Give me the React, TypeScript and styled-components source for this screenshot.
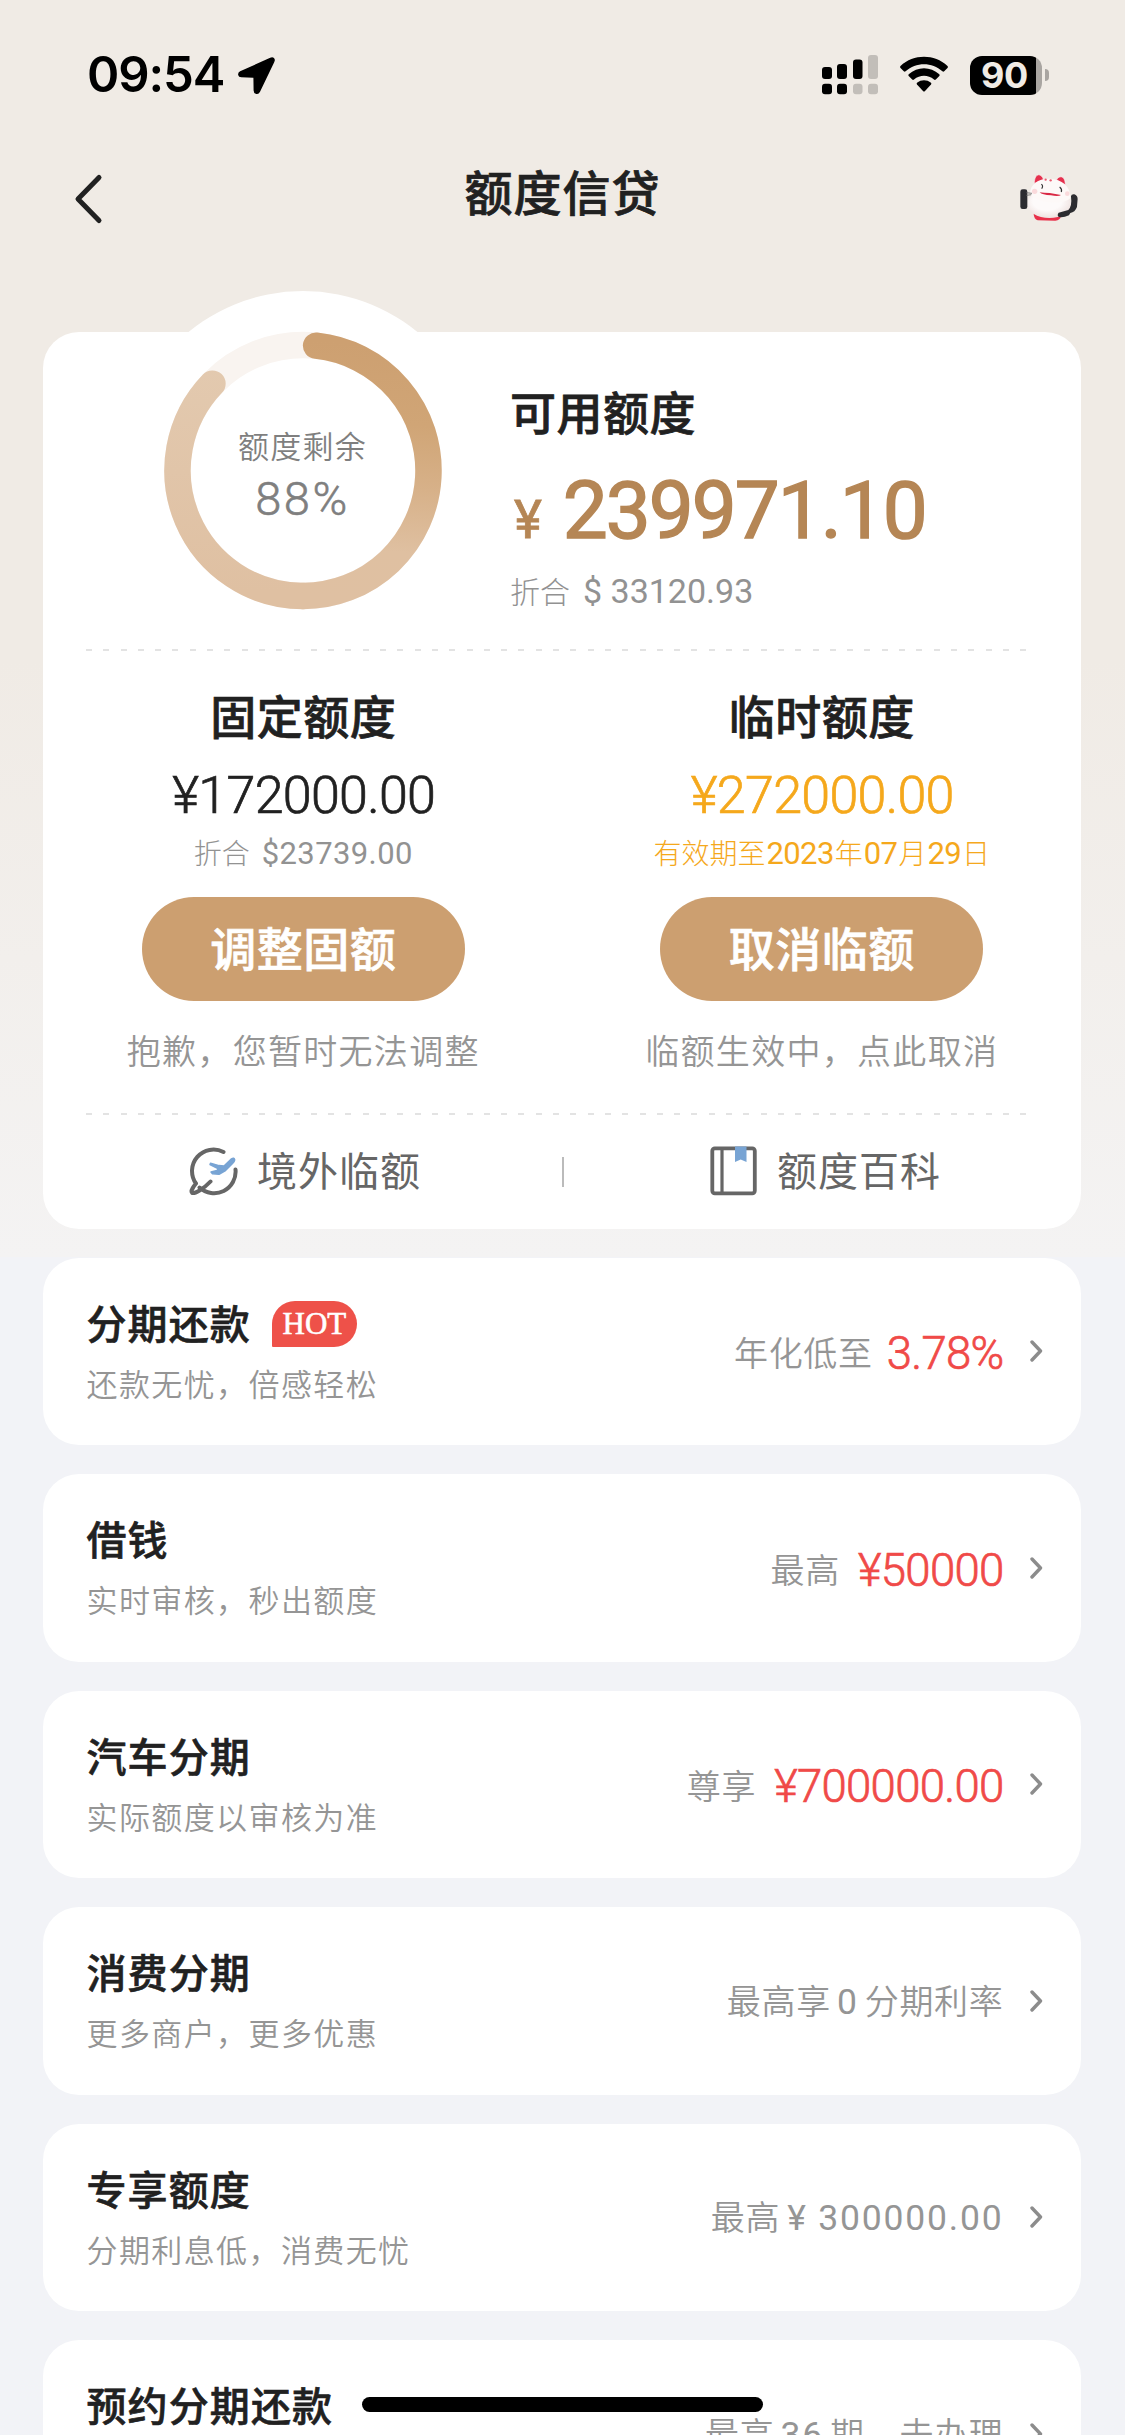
import React from "react";
import styled, { createGlobalStyle } from "styled-components";

const CJK = `"Noto Sans CJK SC", sans-serif`;
const NUM = `Roboto, "Noto Sans CJK SC", sans-serif`;

const Global = createGlobalStyle`
  * { box-sizing: border-box; }
  body { margin: 0; background: #f2f3f7; font-family: ${CJK}; color: #212121; }
`;

const Page = styled.div`
  position: relative;
  width: 1125px;
  height: 2435px;
  overflow: hidden;
  background: linear-gradient(#f0ebe5 0, #f0ebe5 660px, #f4f3f3 1257px, transparent 1257px) #f2f3f7;
`;

const StatusBar = styled.div`
  height: 150px;
  padding: 55px 76px 0 87px;
  display: flex;
  align-items: flex-start;
  justify-content: space-between;
`;
const StatusGroup = styled.div<{ $gap: number }>`
  display: flex;
  height: 40px;
  align-items: center;
  gap: ${(p) => p.$gap}px;
`;
const Clock = styled.span`
  font: 600 49px/40px Inter, sans-serif;
  letter-spacing: -1.1px;
  color: #000;
`;
const Battery = styled.div`
  display: flex;
  align-items: center;
  gap: 3px;
`;
const BatteryBody = styled.div`
  width: 72px;
  height: 39px;
  border-radius: 12px;
  background: linear-gradient(90deg, #000 66px, #a9a5a1 66px);
  color: #f0ebe5;
  font: 700 36px/39px Inter, sans-serif;
  letter-spacing: -0.5px;
  padding-left: 11px;
`;
const BatteryNub = styled.div`
  width: 4px;
  height: 12px;
  border-radius: 0 4px 4px 0;
  background: #a9a5a1;
`;

const NavBar = styled.header`
  height: 181.7px;
  padding: 0 45px 0 72px;
  display: grid;
  grid-template-columns: 63px 1fr 90px;
`;
const BackIcon = styled.svg`
  margin-top: 22px;
  width: 34px;
  height: 54px;
`;
const NavTitle = styled.h1`
  margin: 0;
  text-align: center;
  font-weight: 500;
  -webkit-text-stroke: 0.7px currentColor;
  font-size: 48px;
  line-height: 81px;
  letter-spacing: 1px;
`;
const Mascot = styled.svg`
  margin-top: 21.7px;
  justify-self: end;
  width: 63.3px;
  height: 51.7px;
`;

const Card = styled.section`
  margin: 0 44px 0 43px;
  height: 897px;
  border-radius: 36px;
  background: #fff;
  display: flex;
  flex-direction: column;
`;
const Summary = styled.div`
  height: 317px;
  display: flex;
`;
const Gauge = styled.div`
  margin: -41px 27.5px 0 79.5px;
  width: 360px;
  height: 360px;
  flex: none;
  border-radius: 50%;
  background: #fff;
  display: grid;
  > * { grid-area: 1 / 1; }
`;
const GaugeText = styled.div`
  padding-top: 132px;
  display: flex;
  flex-direction: column;
  align-items: center;
  color: #7f7f7f;
`;
const GaugeLabel = styled.span`
  font-size: 31px;
  line-height: 44px;
  letter-spacing: 1.2px;
  font-weight: 350;
`;
const GaugeValue = styled.span`
  margin-top: 7px;
  font: 300 47px/50px ${NUM};
  -webkit-text-stroke: 0.6px currentColor;
  letter-spacing: 2.6px;
`;
const Available = styled.div`
  padding-top: 48px;
  display: flex;
  flex-direction: column;
`;
const Heading = styled.h2`
  margin: 0;
  font-size: 46px;
  line-height: 60px;
  letter-spacing: 0.5px;
  font-weight: 500;
  -webkit-text-stroke: 0.7px currentColor;
`;
const Balance = styled.div`
  margin-top: 26.5px;
  display: flex;
  align-items: baseline;
  gap: 21px;
  font: 400 80px/90px ${NUM};
  -webkit-text-stroke: 1.5px currentColor;
  letter-spacing: -2px;
  color: #b58655;
`;
const BalanceSign = styled.span`
  margin-left: 4px;
  font-size: 53px;
  -webkit-text-stroke-width: 0.8px;
  letter-spacing: 0;
`;
const Converted = styled.div<{ $size: number; $gap: number; $top: number; $color?: string }>`
  margin-top: ${(p) => p.$top}px;
  display: flex;
  align-items: baseline;
  gap: ${(p) => p.$gap}px;
  font: 300 ${(p) => p.$size}px/40px ${CJK};
  color: ${(p) => p.$color ?? "#929292"};
`;
const ConvertedNumber = styled.span<{ $size: number; $spacing?: number }>`
  font: 400 ${(p) => p.$size}px/40px ${NUM};
  letter-spacing: ${(p) => p.$spacing ?? -0.6}px;
`;
const Dashes = styled.div`
  flex: none;
  margin: 0 54px 0 43px;
  height: 2px;
  background: repeating-linear-gradient(90deg, #e3e3e3 0, #e3e3e3 6px, transparent 6px, transparent 17.3px);
`;
const Limits = styled.div`
  height: 462px;
  padding: 33px 0 0 1px;
  display: grid;
  grid-template-columns: 1fr 1fr;
`;
const Limit = styled.div`
  display: flex;
  flex-direction: column;
  align-items: center;
`;
const LimitAmount = styled.div<{ $color: string }>`
  margin-top: 22px;
  font: 300 52px/60px ${NUM};
  -webkit-text-stroke: 0.7px currentColor;
  letter-spacing: -0.7px;
  padding-left: 1px;
  color: ${(p) => p.$color};
`;
const PillButton = styled.button`
  margin: 23px 0 0;
  padding: 0 0 6px;
  width: 323px;
  height: 104px;
  border: 0;
  border-radius: 52px;
  background: #cc9f70;
  color: #fff;
  font: 500 46px/98px ${CJK};
  -webkit-text-stroke: 0.7px currentColor;
  letter-spacing: 0.5px;
`;
const LimitNote = styled.div`
  margin-top: 27px;
  font-size: 34px;
  line-height: 44px;
  letter-spacing: 1.3px;
  font-weight: 350;
  color: #959595;
`;
const Links = styled.div`
  flex: 1;
  display: grid;
  grid-template-columns: 1fr 2px 1fr;
  align-items: start;
`;
const LinkItem = styled.div`
  padding: 29px 0 0 5px;
  display: flex;
  justify-content: center;
  align-items: flex-start;
  gap: 17px;
  color: #666;
  svg { width: 52px; height: 52px; margin-top: 1px; }
`;
const LinkLabel = styled.span`
  font-size: 40px;
  line-height: 50px;
  letter-spacing: 1px;
`;
const LinkDivider = styled.div`
  margin: 42px 0 0 0.5px;
  width: 2px;
  height: 30px;
  background: #bbb;
`;

const Offers = styled.div`
  margin: 29px 44px 0 43px;
  display: flex;
  flex-direction: column;
  gap: 29px;
`;
const Offer = styled.section`
  flex: none;
  height: 187.5px;
  border-radius: 36px;
  background: #fff;
  padding: 0 38.5px 0 43.5px;
  display: flex;
  justify-content: space-between;
`;
const OfferText = styled.div`
  padding-top: 39px;
  display: flex;
  flex-direction: column;
  gap: 16px;
`;
const OfferTitleRow = styled.div`
  display: flex;
  height: 50px;
  align-items: center;
  gap: 21px;
`;
const OfferTitle = styled.h3`
  margin: 0;
  font-size: 40px;
  line-height: 50px;
  letter-spacing: 1.1px;
  font-weight: 500;
  -webkit-text-stroke: 0.6px currentColor;
`;
const HotBadge = styled.span`
  margin-top: 4px;
  width: 85px;
  height: 46px;
  border-radius: 23px 23px 23px 1px;
  background: #ee5149;
  color: #fff;
  font: 31px/46px "Liberation Serif", serif;
  -webkit-text-stroke: 0.6px #fff;
  text-align: center;
`;
const OfferSub = styled.div`
  font-size: 31px;
  line-height: 40px;
  letter-spacing: 1.4px;
  font-weight: 350;
  color: #959595;
`;
const OfferSide = styled.div`
  height: 187.5px;
  display: flex;
  align-items: center;
  gap: 26px;
`;
const OfferValue = styled.div<{ $gap: number }>`
  display: flex;
  align-items: baseline;
  gap: ${(p) => p.$gap}px;
  font-size: 34px;
  line-height: 49px;
  letter-spacing: 0.7px;
  font-weight: 350;
  color: #959595;
`;
const Highlight = styled.span`
  font: 300 45.5px/49px ${NUM};
  -webkit-text-stroke: 0.7px currentColor;
  letter-spacing: -0.7px;
  color: #f04a48;
  transform: translateY(2.5px);
`;
const PlainNumber = styled.span`
  font: 400 35.5px/49px ${NUM};
  letter-spacing: 1.8px;
`;
const HomeIndicator = styled.div`
  position: absolute;
  left: 362px;
  top: 2397px;
  width: 401px;
  height: 15px;
  border-radius: 8px;
  background: #000;
`;

const LocationIcon = () => (
  <svg width="38" height="39" viewBox="0 0 38 39">
    <path d="M33.500 2.500 L3.500 16 C1 17.500 1.600 20.300 4.300 20.400 L16.200 20.900 C17 20.900 17.200 21.100 17.200 21.500 L17.400 34.400 C17.500 37.600 20.900 38.400 22.300 35.400 L36.700 5.300 C37.700 3 36 1.400 33.500 2.500Z" fill="#000" stroke="#000" strokeWidth="1.600" />
  </svg>
);

const SignalIcon = () => (
  <svg width="56" height="40" viewBox="0 0 56 40">
    <g fill="#000">
      <rect x="0" y="12" width="10" height="12" rx="3" />
      <rect x="15" y="9" width="10" height="15" rx="3" />
      <rect x="31" y="4.500" width="9.500" height="19.500" rx="3" />
      <rect x="0" y="28.700" width="10" height="10.500" rx="3" />
      <rect x="15" y="28.700" width="10" height="10.500" rx="3" />
    </g>
    <g fill="#c2beb9">
      <rect x="46" y="0" width="10" height="24" rx="3" />
      <rect x="31" y="28.700" width="9.500" height="10.500" rx="3" />
      <rect x="46" y="28.700" width="10" height="10.500" rx="3" />
    </g>
  </svg>
);

const WifiIcon = () => (
  <svg width="48" height="40" viewBox="0 0 48 40">
    <path d="M0.500 11 C13.500 -1.300 34.500 -1.300 47.500 11 Q48.300 12 47.500 13 L44.200 16.300 Q43.300 17 42.400 16.300 C32 6.800 16 6.800 5.600 16.300 Q4.700 17 3.800 16.300 L0.500 13 Q-0.300 12 0.500 11Z" />
    <path d="M8.700 19.300 C17.500 11.300 30.500 11.300 39.300 19.300 Q40.100 20.200 39.300 21.100 L35.800 24.600 Q34.900 25.300 34 24.600 C28 19.600 20 19.600 14 24.600 Q13.100 25.300 12.200 24.600 L8.700 21.100 Q7.900 20.200 8.700 19.300Z" />
    <path d="M17 27.700 C21.200 24.400 26.800 24.400 31 27.700 Q31.800 28.600 31 29.500 L25 35.900 Q24 36.900 23 35.900 L17 29.500 Q16.200 28.600 17 27.700Z" />
  </svg>
);

const MascotIcon = () => (
  <Mascot viewBox="80 35 190 155">
    <defs>
      <radialGradient id="belly" cx="0.45" cy="0.4" r="0.65">
        <stop offset="0.5" stopColor="#fdfafa" />
        <stop offset="1" stopColor="#ecdedb" />
      </radialGradient>
    </defs>
    <path d="M132 70 C132 38 152 36 160 58Z M198 60 C207 42 226 46 225 76Z" fill="#e5304d" stroke="#fbf5f4" strokeWidth="2" />
    <path d="M130 160 L212 168 Q210 180 195 181 L142 180 Q131 177 130 160Z" fill="#e8304a" />
    <ellipse cx="177" cy="131" rx="66" ry="42" fill="url(#belly)" />
    <path d="M119 102 C119 70 145 54 178 55 C215 56 240 78 241 112 C220 135 140 130 119 102Z" fill="#fdf9f8" />
    <rect x="90" y="87" width="21" height="59" rx="7" fill="#2c2c30" />
    <path d="M242 108 Q243 101 252 102 Q262 105 262 116 L260 140 Q254 156 240 158 L236 165 Q218 173 206 170 Q199 165 205 157 L234 149 Q246 138 242 108Z" fill="#2c2c30" />
    <path d="M108 97 L125 99 M108 105 L123 103" stroke="#666" strokeWidth="2.500" />
    <circle cx="133" cy="93" r="8" fill="#f8cdd0" opacity="0.7" />
    <circle cx="231" cy="100" r="7" fill="#f8cdd0" opacity="0.7" />
    <path d="M153 72 Q160 76 154 85 M208 80 Q216 86 213 95" fill="none" stroke="#333" strokeWidth="3.500" />
    <path d="M148 96 Q160 98 178 98 L212 104 Q205 109 182 105 Q155 104 148 96Z" fill="#d92844" />
    <circle cx="166" cy="58" r="3.500" fill="#e85c70" />
    <circle cx="181" cy="60" r="3.500" fill="#e85c70" />
  </Mascot>
);

const RADIUS = 125.5;
const CENTER = { x: 180, y: 179.5 };

const ringPoint = (degrees: number) => {
  const a = ((degrees - 90) * Math.PI) / 180;
  return `${(CENTER.x + RADIUS * Math.cos(a)).toFixed(2)} ${(CENTER.y + RADIUS * Math.sin(a)).toFixed(2)}`;
};

const ringArc = (from: number, to: number) =>
  `M${ringPoint(from)} A${RADIUS} ${RADIUS} 0 0 1 ${ringPoint(to)}`;

const GaugeRing = ({ percent }: { percent: number }) => (
  <svg width="360" height="360" viewBox="0 0 360 360" fill="none" strokeWidth="26.500" strokeLinecap="round">
    <defs>
      <linearGradient id="ring" gradientUnits="userSpaceOnUse" x1="200" y1="50" x2="180" y2="305">
        <stop offset="0" stopColor="#cda071" />
        <stop offset="0.3" stopColor="#d0a576" />
        <stop offset="0.55" stopColor="#d7b189" />
        <stop offset="0.8" stopColor="#dfc0a1" />
        <stop offset="1" stopColor="#dfc0a2" />
      </linearGradient>
      <linearGradient id="ringTail" gradientUnits="userSpaceOnUse" x1="0" y1="60" x2="0" y2="300">
        <stop offset="0" stopColor="#e3cab0" />
        <stop offset="1" stopColor="#dfc0a2" />
      </linearGradient>
    </defs>
    <circle cx={CENTER.x} cy={CENTER.y} r={RADIUS} stroke="#f9f4f0" />
    <path d={ringArc(180, percent * 3.6 - 3)} stroke="url(#ringTail)" />
    <path d={ringArc(6, 180)} stroke="url(#ring)" />
  </svg>
);

const PlaneIcon = () => (
  <svg viewBox="0 0 52 52" fill="none" strokeLinecap="round" strokeLinejoin="round">
    <path d="M35.500 7 A21.500 21.500 0 0 0 8 38.500 C4.500 42.500 2.800 46.500 4 47.700 C6 49.600 16 43.500 22.500 36.500 M47.500 24.500 A21.500 21.500 0 0 1 11.500 42.500" stroke="#666" strokeWidth="4" />
    <path d="M22.500 18.200 L31 20.600 L36 21 L43.500 13.800 Q46.200 12.300 46.700 14.800 Q46.500 16.500 44.500 18.500 L37.500 25.500 L31 29.300 L24.500 28.800 L23 27 L29 25.500 L30 23.700 L22 19.700Z" fill="#78a4d4" stroke="#78a4d4" strokeWidth="1.500" />
  </svg>
);

const BookIcon = () => (
  <svg viewBox="0 0 52 52" fill="none">
    <rect x="4.300" y="3.300" width="42.500" height="45" rx="2.500" stroke="#666" strokeWidth="3.800" />
    <path d="M14 3 V48" stroke="#666" strokeWidth="3.200" />
    <path d="M27 1.500 H38.500 V17 L32.700 14.500 L27 17Z" fill="#78a4d4" />
  </svg>
);

const Chevron = () => (
  <svg width="13" height="22" viewBox="0 0 13 22">
    <path d="M2 2 L10.500 11 L2 20" fill="none" stroke="#8c8c8c" strokeWidth="3.400" strokeLinecap="round" strokeLinejoin="round" />
  </svg>
);

const offers = [
  { title: "分期还款", hot: true, sub: "还款无忧，倍感轻松", gap: 14, value: <>年化低至<Highlight>3.78%</Highlight></> },
  { title: "借钱", sub: "实时审核，秒出额度", gap: 18, value: <>最高<Highlight>¥50000</Highlight></> },
  { title: "汽车分期", sub: "实际额度以审核为准", gap: 18, value: <>尊享<Highlight>¥700000.00</Highlight></> },
  { title: "消费分期", sub: "更多商户，更多优惠", gap: 6, value: <>最高享<PlainNumber>0</PlainNumber>分期利率</> },
  { title: "专享额度", sub: "分期利息低，消费无忧", gap: 7, value: <>最高<PlainNumber>¥ 300000.00</PlainNumber></> },
  { title: "预约分期还款", sub: "提前预约，轻松还款", gap: 6, value: <>最高<PlainNumber>36</PlainNumber>期，去办理</> },
];

export default function App() {
  return (
    <Page>
      <Global />
      <StatusBar>
        <StatusGroup $gap={13}>
          <Clock>09:54</Clock>
          <LocationIcon />
        </StatusGroup>
        <StatusGroup $gap={22}>
          <SignalIcon />
          <WifiIcon />
          <Battery>
            <BatteryBody>90</BatteryBody>
            <BatteryNub />
          </Battery>
        </StatusGroup>
      </StatusBar>
      <NavBar>
        <BackIcon viewBox="0 0 34 54">
          <path d="M27 5.500 L6 27 L27 48.500" fill="none" stroke="#212121" strokeWidth="5" strokeLinecap="round" strokeLinejoin="round" />
        </BackIcon>
        <NavTitle>额度信贷</NavTitle>
        <MascotIcon />
      </NavBar>

      <Card>
        <Summary>
          <Gauge>
            <GaugeRing percent={88} />
            <GaugeText>
              <GaugeLabel>额度剩余</GaugeLabel>
              <GaugeValue>88%</GaugeValue>
            </GaugeText>
          </Gauge>
          <Available>
            <Heading>可用额度</Heading>
            <Balance>
              <BalanceSign>¥</BalanceSign>
              <span>239971.10</span>
            </Balance>
            <Converted $size={30} $gap={13} $top={4.5}>
              折合<ConvertedNumber $size={34} $spacing={0}>$ 33120.93</ConvertedNumber>
            </Converted>
          </Available>
        </Summary>
        <Dashes />
        <Limits>
          <Limit>
            <Heading>固定额度</Heading>
            <LimitAmount $color="#212121">¥172000.00</LimitAmount>
            <Converted $size={28} $gap={12} $top={6}>
              折合<ConvertedNumber $size={31} $spacing={0.4}>$23739.00</ConvertedNumber>
            </Converted>
            <PillButton>调整固额</PillButton>
            <LimitNote>抱歉，您暂时无法调整</LimitNote>
          </Limit>
          <Limit>
            <Heading>临时额度</Heading>
            <LimitAmount $color="#f5a81c">¥272000.00</LimitAmount>
            <Converted $size={28} $gap={1} $top={6} $color="#f5a81c">
              有效期至<ConvertedNumber $size={31}>2023</ConvertedNumber>年
              <ConvertedNumber $size={31}>07</ConvertedNumber>月
              <ConvertedNumber $size={31}>29</ConvertedNumber>日
            </Converted>
            <PillButton>取消临额</PillButton>
            <LimitNote>临额生效中，点此取消</LimitNote>
          </Limit>
        </Limits>
        <Dashes />
        <Links>
          <LinkItem>
            <PlaneIcon />
            <LinkLabel>境外临额</LinkLabel>
          </LinkItem>
          <LinkDivider />
          <LinkItem>
            <BookIcon />
            <LinkLabel>额度百科</LinkLabel>
          </LinkItem>
        </Links>
      </Card>

      <Offers>
        {offers.map((o) => (
          <Offer key={o.title}>
            <OfferText>
              <OfferTitleRow>
                <OfferTitle>{o.title}</OfferTitle>
                {o.hot && <HotBadge>HOT</HotBadge>}
              </OfferTitleRow>
              <OfferSub>{o.sub}</OfferSub>
            </OfferText>
            <OfferSide>
              <OfferValue $gap={o.gap}>{o.value}</OfferValue>
              <Chevron />
            </OfferSide>
          </Offer>
        ))}
      </Offers>
      <HomeIndicator />
    </Page>
  );
}
